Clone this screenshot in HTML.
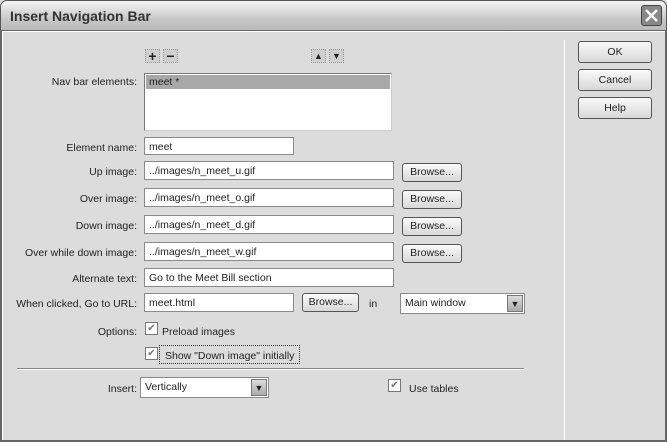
<!DOCTYPE html>
<html><head><style>
*{margin:0;padding:0;box-sizing:border-box}
body{width:667px;height:442px;overflow:hidden;background:#dcdcdc;font-family:"Liberation Sans",sans-serif;font-size:10.5px;color:#222;position:relative}
.a{position:absolute}
#title{left:0;top:0;width:667px;height:31px;background:linear-gradient(#f4f4f4,#c8c8c8 60%,#b8b8b8);border:1px solid #555;border-bottom:none;border-radius:7px 7px 0 0}
#title span{position:absolute;left:9px;top:7px;font-size:14px;font-weight:bold;color:#333}
#close{left:641px;top:5px;width:21px;height:21px;background:#888;border:1px solid #444;border-radius:3px}
#frame{left:0;top:30px;width:667px;height:412px;border:2px solid #666;border-top:1px solid #666;box-shadow:inset 1px 1px 0 #fff}
.lbl{text-align:right;right:530px;white-space:nowrap}
.in{background:#fff;border:1px solid #8a8a8a;padding:3px 4px;white-space:nowrap;font-size:10.5px}
.btn{background:linear-gradient(#fafafa,#d8d8d8);border:1px solid #555;border-radius:3px;text-align:center;line-height:17px}
.ib{width:15px;height:14px;background:#d0d0d0;border:1px dotted #999;font-weight:bold;text-align:center;line-height:12px;font-size:14px}
.cb{width:13px;height:13px;background:#fff;border:1px solid #777;font-size:10px;line-height:11px;text-align:center;color:#777}
.sel{background:#fff;border:1px solid #8a8a8a;padding:3px 4px}
.dd{position:absolute;right:1px;top:1px;width:16px;bottom:1px;background:linear-gradient(#ddd,#aaa);border:1px solid #777;font-size:9px;text-align:center;line-height:16px}
</style></head><body>
<div class="a" id="title"><span>Insert Navigation Bar</span></div>
<div class="a" id="close"><svg width="19" height="19"><path d="M4 4L15 15M15 4L4 15" stroke="#fff" stroke-width="2.5"/></svg></div>
<div class="a" id="frame"></div>
<div class="a" style="left:564px;top:40px;width:1px;height:400px;background:#999;border-right:1px solid #fff"></div>

<div class="a ib" style="left:145px;top:49px">+</div>
<div class="a ib" style="left:163px;top:49px">−</div>
<div class="a ib" style="left:311px;top:49px;font-size:9px">▲</div>
<div class="a ib" style="left:329px;top:49px;font-size:9px">▼</div>

<div class="a lbl" style="top:76px">Nav bar elements:</div>
<div class="a" style="left:144px;top:73px;width:248px;height:58px;background:#fff;border:1px solid #777;border-right-color:#ccc;border-bottom-color:#ccc"><div style="background:#a8a8a8;margin:1px;height:14px;padding-left:3px;line-height:14px">meet *</div></div>

<div class="a lbl" style="top:142px">Element name:</div>
<div class="a in" style="left:144px;top:137px;width:150px;height:18px">meet</div>

<div class="a lbl" style="top:166px">Up image:</div>
<div class="a in" style="left:144px;top:161px;width:250px;height:19px">../images/n_meet_u.gif</div>
<div class="a btn" style="left:402px;top:163px;width:60px;height:19px">Browse...</div>
<div class="a lbl" style="top:193px">Over image:</div>
<div class="a in" style="left:144px;top:188px;width:250px;height:19px">../images/n_meet_o.gif</div>
<div class="a btn" style="left:402px;top:190px;width:60px;height:19px">Browse...</div>
<div class="a lbl" style="top:220px">Down image:</div>
<div class="a in" style="left:144px;top:215px;width:250px;height:19px">../images/n_meet_d.gif</div>
<div class="a btn" style="left:402px;top:217px;width:60px;height:19px">Browse...</div>
<div class="a lbl" style="top:247px">Over while down image:</div>
<div class="a in" style="left:144px;top:242px;width:250px;height:19px">../images/n_meet_w.gif</div>
<div class="a btn" style="left:402px;top:244px;width:60px;height:19px">Browse...</div>
<div class="a lbl" style="top:273px">Alternate text:</div>
<div class="a in" style="left:144px;top:268px;width:250px;height:19px">Go to the Meet Bill section</div>

<div class="a lbl" style="top:298px">When clicked, Go to URL:</div>
<div class="a in" style="left:144px;top:293px;width:150px;height:19px">meet.html</div>
<div class="a btn" style="left:302px;top:293px;width:57px;height:19px">Browse...</div>
<div class="a" style="left:369px;top:298px">in</div>
<div class="a sel" style="left:400px;top:293px;width:125px;height:21px">Main window<div class="dd">▼</div></div>

<div class="a lbl" style="top:326px">Options:</div>
<div class="a cb" style="left:145px;top:322px">✔</div>
<div class="a" style="left:162px;top:326px">Preload images</div>
<div class="a cb" style="left:145px;top:347px">✔</div>
<div class="a" style="left:159px;top:345px;width:141px;height:19px;border:1px dotted #333;padding:4px 0 0 5px;white-space:nowrap">Show "Down image" initially</div>

<div class="a" style="left:17px;top:368px;width:507px;height:2px;background:#888;border-bottom:1px solid #fff"></div>

<div class="a lbl" style="top:383px">Insert:</div>
<div class="a sel" style="left:140px;top:377px;width:129px;height:21px">Vertically<div class="dd">▼</div></div>
<div class="a cb" style="left:388px;top:379px">✔</div>
<div class="a" style="left:409px;top:383px">Use tables</div>

<div class="a btn" style="left:578px;top:41px;width:74px;height:22px;line-height:20px">OK</div>
<div class="a btn" style="left:578px;top:69px;width:74px;height:22px;line-height:20px">Cancel</div>
<div class="a btn" style="left:578px;top:97px;width:74px;height:22px;line-height:20px">Help</div>
</body></html>
